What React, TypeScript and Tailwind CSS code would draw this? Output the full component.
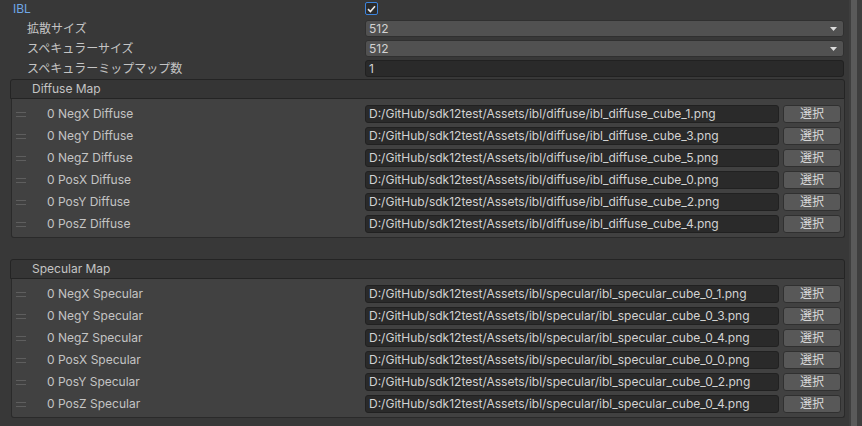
import React from "react";

const diffuseRows = [
  ["0 NegX Diffuse", "D:/GitHub/sdk12test/Assets/ibl/diffuse/ibl_diffuse_cube_1.png"],
  ["0 NegY Diffuse", "D:/GitHub/sdk12test/Assets/ibl/diffuse/ibl_diffuse_cube_3.png"],
  ["0 NegZ Diffuse", "D:/GitHub/sdk12test/Assets/ibl/diffuse/ibl_diffuse_cube_5.png"],
  ["0 PosX Diffuse", "D:/GitHub/sdk12test/Assets/ibl/diffuse/ibl_diffuse_cube_0.png"],
  ["0 PosY Diffuse", "D:/GitHub/sdk12test/Assets/ibl/diffuse/ibl_diffuse_cube_2.png"],
  ["0 PosZ Diffuse", "D:/GitHub/sdk12test/Assets/ibl/diffuse/ibl_diffuse_cube_4.png"],
];

const specularRows = [
  ["0 NegX Specular", "D:/GitHub/sdk12test/Assets/ibl/specular/ibl_specular_cube_0_1.png"],
  ["0 NegY Specular", "D:/GitHub/sdk12test/Assets/ibl/specular/ibl_specular_cube_0_3.png"],
  ["0 NegZ Specular", "D:/GitHub/sdk12test/Assets/ibl/specular/ibl_specular_cube_0_4.png"],
  ["0 PosX Specular", "D:/GitHub/sdk12test/Assets/ibl/specular/ibl_specular_cube_0_0.png"],
  ["0 PosY Specular", "D:/GitHub/sdk12test/Assets/ibl/specular/ibl_specular_cube_0_2.png"],
  ["0 PosZ Specular", "D:/GitHub/sdk12test/Assets/ibl/specular/ibl_specular_cube_0_4.png"],
];

const Dropdown: React.FC<{ value: string }> = ({ value }) => (
  <div className="flex-1 h-[17px] flex items-center justify-between rounded-[3px] bg-[#515151] border border-[#303030] pl-[3px] pr-[6px] text-[#d2d2d2]">
    <span>{value}</span>
    <svg width="7" height="4" viewBox="0 0 7 4">
      <path d="M0 0 L7 0 L3.5 4 Z" fill="#dcdcdc" />
    </svg>
  </div>
);

const MapList: React.FC<{ title: string; rows: string[][] }> = ({ title, rows }) => (
  <div className="ml-[10px] mr-[4px]">
    {/* foldout header */}
    <div className="h-[20px] flex items-center bg-[#353535] border border-[#242424] rounded-t-[3px] pl-[21px] text-[#c4c4c4]">
      {title}
    </div>
    <div className="ml-[1px] bg-[#414141] border border-t-0 border-[#2a2a2a] rounded-b-[3px] pt-[6px] pb-[4px] flex flex-col gap-[4px]">
      {rows.map(([label, path], i) => (
        <div key={i} className="h-[18px] flex items-center">
          <div className="ml-[4px] w-[10px] flex flex-col gap-[3px]">
            <div className="h-px bg-[#5e5e5e]" />
            <div className="h-px bg-[#5e5e5e]" />
          </div>
          <div className="w-[339px] pl-[21px] text-[#c4c4c4]">{label}</div>
          <div className="flex-1 h-[18px] flex items-center bg-[#2a2a2a] border border-[#212121] rounded-[3px] pl-[3px] text-[#d2d2d2]">
            {path}
          </div>
          <button className="ml-[4px] mr-[3px] w-[58px] h-[18px] flex items-center justify-center bg-[#585858] border border-[#303030] rounded-[3px] text-[#d8d8d8]">
            選択
          </button>
        </div>
      ))}
    </div>
  </div>
);

export default function App() {
  return (
    <div className="w-[862px] h-[426px] bg-[#383838] flex overflow-hidden text-[12px] leading-none font-[Inter,'Noto_Sans_CJK_JP',sans-serif]">
      <div className="flex-1 flex flex-col">
        {/* IBL toggle */}
        <div className="h-[17px] flex items-center">
          <div className="w-[365px] pl-[13px] text-[#6fa6e6]">IBL</div>
          <div className="w-[13px] h-[13px] rounded-[2px] border border-[#3d84dc] bg-[#2b2b2b] flex items-center justify-center">
            <svg width="9" height="8" viewBox="0 0 9 8">
              <path d="M1 4.2 L3.4 6.5 L8 1.2" stroke="#e8e8e8" strokeWidth="1.6" fill="none" />
            </svg>
          </div>
        </div>

        <div className="mt-[3px] h-[17px] flex items-center pr-[5px]">
          <div className="w-[365px] pl-[27px] text-[#c4c4c4]">拡散サイズ</div>
          <Dropdown value="512" />
        </div>
        <div className="mt-[3px] h-[17px] flex items-center pr-[5px]">
          <div className="w-[365px] pl-[27px] text-[#c4c4c4]">スペキュラーサイズ</div>
          <Dropdown value="512" />
        </div>
        <div className="mt-[3px] h-[17px] flex items-center pr-[5px]">
          <div className="w-[365px] pl-[27px] text-[#c4c4c4]">スペキュラーミップマップ数</div>
          <div className="flex-1 h-[17px] flex items-center bg-[#2a2a2a] border border-[#212121] rounded-[3px] pl-[3px] text-[#d2d2d2]">
            1
          </div>
        </div>

        <div className="mt-[2px]">
          <MapList title="Diffuse Map" rows={diffuseRows} />
        </div>
        <div className="mt-[21px]">
          <MapList title="Specular Map" rows={specularRows} />
        </div>
      </div>

      {/* scrollbar */}
      <div className="w-[13px] bg-[#3e3e3e] flex">
        <div className="ml-[2px] w-[6px] bg-[#5a5a5a]" />
      </div>
    </div>
  );
}
